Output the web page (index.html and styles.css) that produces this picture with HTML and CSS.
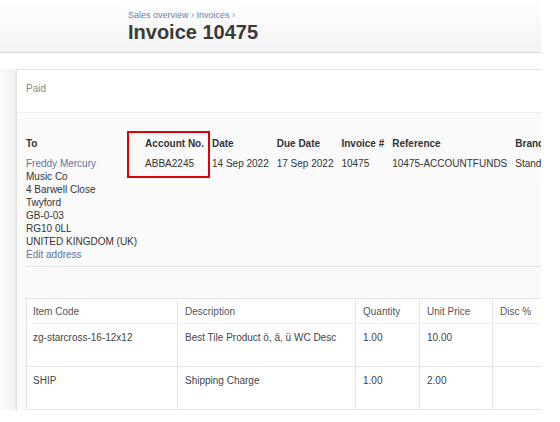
FILE: index.html
```html
<!DOCTYPE html>
<html>
<head>
<meta charset="utf-8">
<link rel="stylesheet" href="styles.css">
</head>
<body>
<div class="page">
  <header class="topbar">
    <div class="crumbs"><a>Sales overview</a> › <a>Invoices</a> ›</div>
    <h1 class="title">Invoice 10475</h1>
  </header>
  <div class="main">
    <div class="gutter"></div>
    <section class="card">
      <div class="card-head">Paid</div>
      <div class="card-body">
        <div class="fields">
          <div class="field">
            <div class="label">To</div>
            <div class="value">
              <a class="link">Freddy Mercury</a><br>
              Music Co<br>
              4 Barwell Close<br>
              Twyford<br>
              GB-0-03<br>
              RG10 0LL<br>
              UNITED KINGDOM (UK)<br>
              <a class="link">Edit address</a>
            </div>
          </div>
          <div class="field">
            <div class="label">Account No.</div>
            <div class="value">ABBA2245</div>
            <span class="redbox"></span>
          </div>
          <div class="field">
            <div class="label">Date</div>
            <div class="value">14 Sep 2022</div>
          </div>
          <div class="field">
            <div class="label">Due Date</div>
            <div class="value">17 Sep 2022</div>
          </div>
          <div class="field">
            <div class="label">Invoice #</div>
            <div class="value">10475</div>
          </div>
          <div class="field">
            <div class="label">Reference</div>
            <div class="value">10475-ACCOUNTFUNDS</div>
          </div>
          <div class="field">
            <div class="label">Branding</div>
            <div class="value">Standard</div>
          </div>
        </div>
        <div class="divider"></div>
        <table class="items">
          <colgroup>
            <col class="c1"><col class="c2"><col class="c3"><col class="c4"><col class="c5">
          </colgroup>
          <thead>
            <tr><th>Item Code</th><th>Description</th><th>Quantity</th><th>Unit Price</th><th>Disc %</th></tr>
          </thead>
          <tbody>
            <tr><td>zg-starcross-16-12x12</td><td>Best Tile Product ö, ä, ü WC Desc</td><td>1.00</td><td>10.00</td><td></td></tr>
            <tr><td>SHIP</td><td>Shipping Charge</td><td>1.00</td><td>2.00</td><td></td></tr>
          </tbody>
        </table>
      </div>
    </section>
  </div>
</div>
</body>
</html>
```
FILE: styles.css
```css
html, body {
  margin: 0;
  padding: 0;
  background: #fff;
}
body {
  font-family: "Liberation Sans", Arial, sans-serif;
  color: #333;
}
.page {
  width: 541px;
  height: 410px;
  overflow: hidden;
  background: #fff;
}
.topbar {
  box-sizing: border-box;
  height: 53px;
  padding: 10px 0 0 128px;
  background: linear-gradient(#ffffff, #f3f3f3);
  border-bottom: 1px solid #d6d6d6;
}
.crumbs {
  font-size: 9px;
  line-height: 11px;
  color: #6a7fab;
}
.title {
  margin: 0;
  font-size: 20px;
  line-height: 22px;
  font-weight: bold;
  color: #3a3a3a;
}
.main {
  display: flex;
  padding-top: 16px;
  height: 400px;
}
.gutter {
  width: 15px;
  flex: none;
  background: linear-gradient(90deg, #fbfbfb, #f2f2f2);
  border-right: 1px solid #ededed;
}
.card {
  flex: 1;
  min-width: 0;
  border-left: 1px solid #e2e2e2;
  border-top: 1px solid #e4e4e4;
  background: #fff;
}
.card-head {
  box-sizing: border-box;
  height: 43px;
  padding: 13px 0 0 9px;
  font-size: 10px;
  line-height: 12px;
  color: #888;
  border-bottom: 1px solid #efefef;
}
.card-body {
  background: #fafafa;
  padding: 24px 0 0 9px;
  height: 400px;
}
.fields {
  display: flex;
  align-items: flex-start;
  gap: 8px;
  white-space: nowrap;
  font-size: 10px;
  line-height: 13px;
}
.field {
  position: relative;
  flex: none;
}
.label {
  font-weight: bold;
  color: #333;
  margin-bottom: 7px;
}
.value {
  color: #333;
}
.link {
  color: #5b73a6;
}
.redbox {
  position: absolute;
  left: -18px;
  right: -6px;
  top: -6px;
  bottom: -8px;
  border: 2px solid #e0000b;
}
.divider {
  margin-top: 5px;
  height: 1px;
  background: #e6e6e6;
  width: 600px;
}
.items {
  margin-top: 31px;
  border-collapse: collapse;
  table-layout: fixed;
  width: 536px;
  font-size: 10px;
  line-height: 13px;
  color: #444;
  background: #fff;
}
.c1 { width: 151px; }
.c2 { width: 178px; }
.c3 { width: 64px; }
.c4 { width: 73px; }
.c5 { width: 70px; }
.items th, .items td {
  border: 1px solid #e4e4e4;
  text-align: left;
  vertical-align: top;
  padding: 0 0 0 6px;
  white-space: nowrap;
}
.items th {
  font-weight: normal;
  color: #555;
  height: 25px;
  padding-top: 6px;
  box-sizing: border-box;
  border-bottom-color: #f0f0f0;
}
.items td {
  height: 43px;
  box-sizing: border-box;
  padding-top: 7px;
  border-top-color: #f0f0f0;
}
.items td:nth-child(n+2), .items th:nth-child(n+2) {
  padding-left: 7px;
}
```
